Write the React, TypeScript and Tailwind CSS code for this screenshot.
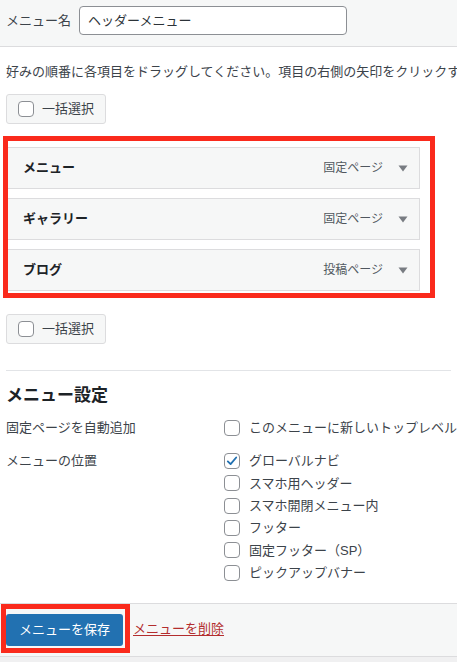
import React from "react";

const items = [
  { title: "メニュー", type: "固定ページ" },
  { title: "ギャラリー", type: "固定ページ" },
  { title: "ブログ", type: "投稿ページ" },
];

const locations = [
  { label: "グローバルナビ", checked: true },
  { label: "スマホ用ヘッダー", checked: false },
  { label: "スマホ開閉メニュー内", checked: false },
  { label: "フッター", checked: false },
  { label: "固定フッター（SP）", checked: false },
  { label: "ピックアップバナー", checked: false },
];

function Checkbox({ checked = false }: { checked?: boolean }) {
  return (
    <span className="w-4 h-4 shrink-0 rounded-[4px] border border-[#8c8f94] bg-white flex items-center justify-center">
      {checked && (
        <svg width="14" height="14" viewBox="0 0 20 20">
          <path d="M4 10.5 L8 14.5 L16 5" fill="none" stroke="#2271b1" strokeWidth="2.6" strokeLinecap="round" strokeLinejoin="round" />
        </svg>
      )}
    </span>
  );
}

function BulkSelect() {
  return (
    <div className="self-start h-[30px] flex items-center gap-[8px] pl-[11px] pr-[11px] rounded-[3px] border border-[#dcdcde] bg-[#f6f7f7] text-[13px] text-[#3c434a]">
      <Checkbox />
      <span>一括選択</span>
    </div>
  );
}

export default function App() {
  return (
    <div className="w-[457px] h-[662px] overflow-hidden bg-[#f0f0f1] text-[#3c434a] font-['Liberation_Sans','Noto_Sans_CJK_JP',sans-serif]">
      {/* Menu name bar */}
      <div className="h-[47px] bg-[#f6f7f7] border-b border-[#dcdcde] pt-[6px] px-[6px] flex items-start gap-[8px]">
        <span className="h-[29px] flex items-center text-[13px] text-[#3c434a]">メニュー名</span>
        <div className="w-[268px] h-[29px] rounded-[4px] border border-[#8c8f94] bg-white px-[8px] flex items-center text-[13px] text-[#2c3338]">
          ヘッダーメニュー
        </div>
      </div>

      {/* Structure */}
      <div className="bg-white px-[6px] pt-[15px] pb-[19px] flex flex-col overflow-hidden">
        <p className="h-[20px] leading-[20px] text-[13px] whitespace-nowrap">
          好みの順番に各項目をドラッグしてください。項目の右側の矢印をクリックすると、追加の設定オプションが表示されます。
        </p>
        <div className="mt-[12px] flex">
          <BulkSelect />
        </div>

        <div className="mt-[12px] ml-[-3px] w-[432px] border-[5px] border-[#fa2a1c] pt-[6px] pb-[2px] flex flex-col gap-[9px]">
          {items.map((item) => (
            <div
              key={item.title}
              className="w-[412px] h-[42px] border border-l-0 border-[#dcdcde] bg-[#f6f7f7] pl-[15px] pr-[11px] flex items-center"
            >
              <span className="text-[13px] font-bold text-[#1d2327]">{item.title}</span>
              <span className="ml-auto text-[12px] text-[#50575e]">{item.type}</span>
              <svg className="ml-[15px]" width="10" height="7" viewBox="0 0 10 7">
                <polygon points="0.5,0.5 9.5,0.5 5,6.5" fill="#787c82" />
              </svg>
            </div>
          ))}
        </div>

        <div className="mt-[16px] flex">
          <BulkSelect />
        </div>

        <div className="mt-[26px] border-t border-[#e2e4e7]" />

        <h3 className="mt-[13px] h-[24px] leading-[24px] text-[17px] font-bold text-[#1d2327]">メニュー設定</h3>

        <div className="mt-[9px] grid grid-cols-[218px_1fr] text-[13px]">
          <div className="h-[22px] flex items-center">固定ページを自動追加</div>
          <div className="h-[22px] flex items-center gap-[9px] whitespace-nowrap">
            <Checkbox />
            <span>このメニューに新しいトップレベルページを自動的に追加</span>
          </div>

          <div className="mt-[11px] h-[22px] flex items-center">メニューの位置</div>
          <div className="mt-[11px] flex flex-col">
            {locations.map((loc) => (
              <div key={loc.label} className="h-[22.3px] flex items-center gap-[9px] whitespace-nowrap">
                <Checkbox checked={loc.checked} />
                <span>{loc.label}</span>
              </div>
            ))}
          </div>
        </div>
      </div>

      {/* Footer actions */}
      <div className="h-[54px] bg-[#f6f7f7] border-t border-b border-[#dcdcde] flex items-start pl-[1px]">
        <div className="border-[5px] border-[#fa2a1c] pt-[5px] pb-[2px] pr-[2px]">
          <div className="h-[32px] w-[117px] rounded-[3px] bg-[#2271b1] text-white text-[13px] flex items-center justify-center">
            メニューを保存
          </div>
        </div>
        <a href="#" className="ml-[3px] mt-[15px] text-[13px] text-[#b32d2e] underline underline-offset-2">
          メニューを削除
        </a>
      </div>
    </div>
  );
}
